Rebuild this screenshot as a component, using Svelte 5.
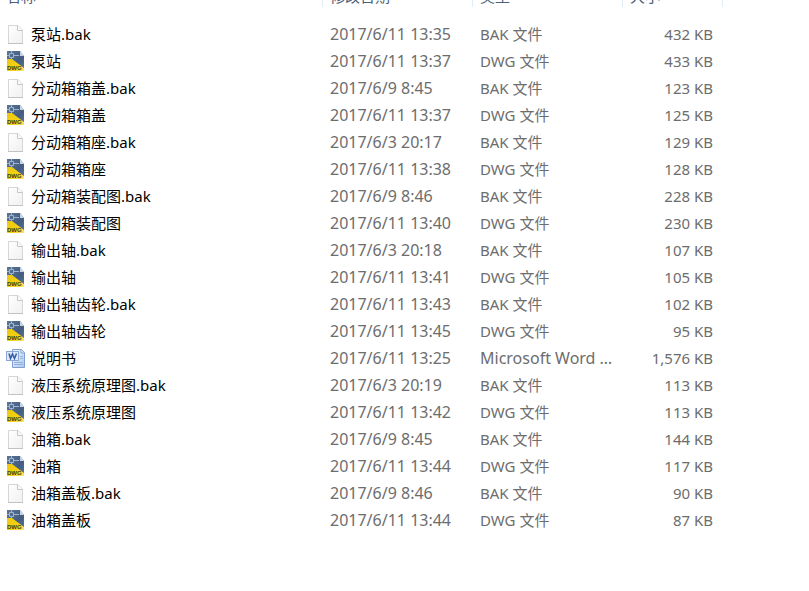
<script lang="ts">
  type Kind = 'bak' | 'dwg' | 'doc';
  type FileRow = { name: string; date: string; kind: Kind; size: string };

  const typeNames = {
    bak: 'BAK 文件',
    dwg: 'DWG 文件',
    doc: 'Microsoft Word 文档'
  };

  const files: FileRow[] = [
    { name: '泵站.bak', date: '2017/6/11 13:35', kind: 'bak', size: '432 KB' },
    { name: '泵站', date: '2017/6/11 13:37', kind: 'dwg', size: '433 KB' },
    { name: '分动箱箱盖.bak', date: '2017/6/9 8:45', kind: 'bak', size: '123 KB' },
    { name: '分动箱箱盖', date: '2017/6/11 13:37', kind: 'dwg', size: '125 KB' },
    { name: '分动箱箱座.bak', date: '2017/6/3 20:17', kind: 'bak', size: '129 KB' },
    { name: '分动箱箱座', date: '2017/6/11 13:38', kind: 'dwg', size: '128 KB' },
    { name: '分动箱装配图.bak', date: '2017/6/9 8:46', kind: 'bak', size: '228 KB' },
    { name: '分动箱装配图', date: '2017/6/11 13:40', kind: 'dwg', size: '230 KB' },
    { name: '输出轴.bak', date: '2017/6/3 20:18', kind: 'bak', size: '107 KB' },
    { name: '输出轴', date: '2017/6/11 13:41', kind: 'dwg', size: '105 KB' },
    { name: '输出轴齿轮.bak', date: '2017/6/11 13:43', kind: 'bak', size: '102 KB' },
    { name: '输出轴齿轮', date: '2017/6/11 13:45', kind: 'dwg', size: '95 KB' },
    { name: '说明书', date: '2017/6/11 13:25', kind: 'doc', size: '1,576 KB' },
    { name: '液压系统原理图.bak', date: '2017/6/3 20:19', kind: 'bak', size: '113 KB' },
    { name: '液压系统原理图', date: '2017/6/11 13:42', kind: 'dwg', size: '113 KB' },
    { name: '油箱.bak', date: '2017/6/9 8:45', kind: 'bak', size: '144 KB' },
    { name: '油箱', date: '2017/6/11 13:44', kind: 'dwg', size: '117 KB' },
    { name: '油箱盖板.bak', date: '2017/6/9 8:46', kind: 'bak', size: '90 KB' },
    { name: '油箱盖板', date: '2017/6/11 13:44', kind: 'dwg', size: '87 KB' }
  ];
</script>

<svg class="defs" aria-hidden="true">
  <defs>
    <linearGradient id="paper" x1="0" y1="0" x2="1" y2="1">
      <stop offset="0" stop-color="#fff" />
      <stop offset="1" stop-color="#f0f0f0" />
    </linearGradient>
    <linearGradient id="blue" x1="0" y1="0" x2="1" y2="1">
      <stop offset="0" stop-color="#5a7596" />
      <stop offset="0.6" stop-color="#435c80" />
      <stop offset="1" stop-color="#5a769c" />
    </linearGradient>
    <linearGradient id="yellow" x1="0" y1="0" x2="1" y2="1">
      <stop offset="0" stop-color="#ecc810" />
      <stop offset="0.6" stop-color="#f5d012" />
      <stop offset="1" stop-color="#fae27a" />
    </linearGradient>
    <linearGradient id="page" x1="0" y1="0" x2="1" y2="1">
      <stop offset="0" stop-color="#f7faff" />
      <stop offset="1" stop-color="#a9c5ee" />
    </linearGradient>
  </defs>
</svg>

<main class="file-list">
  <table>
    <colgroup>
      <col class="col-name" />
      <col class="col-date" />
      <col class="col-type" />
      <col class="col-size" />
    </colgroup>
    <thead>
      <tr>
        <th scope="col">名称</th>
        <th scope="col">修改日期</th>
        <th scope="col">类型</th>
        <th scope="col">大小</th>
      </tr>
    </thead>
    <tbody>
      {#each files as file}
        <tr>
          <td class="name">
            <div class="name-cell">
              <svg class="icon" viewBox="0 0 20 22" aria-hidden="true">
                {#if file.kind === 'bak'}
                  <path d="M2.5 1.5H12L16.5 6V19.5H2.5Z" fill="url(#paper)" stroke="#d6d6d6" />
                  <path d="M11.5 1.5V6.5H16.5" fill="#fafafa" stroke="#c6c6c6" />
                  <path d="M2 19.5H17" stroke="#c2c2c2" />
                {:else if file.kind === 'dwg'}
                  <path d="M1 0H14L18 5V20H1Z" fill="url(#blue)" />
                  <path d="M14 0V5H18Z" fill="#c9d6e6" />
                  <path d="M3.5 2.5H7.5V6.5H3.5ZM1 4.5H3.5M5.5 0V2.5M7.5 4.5H13M5.5 6.5V8" fill="none" stroke="#9fb5cf" />
                  <path d="M1 8H6L18 17V20H1Z" fill="url(#yellow)" />
                  <text x="1" y="19" class="dwg-label">DWG</text>
                {:else}
                  <path d="M6.5 1.5H15.5L18.5 4.5V19.5H6.5Z" fill="url(#page)" stroke="#7f9fd2" />
                  <path d="M15 1.5V5H18.5" fill="#e6effc" stroke="#7f9fd2" />
                  <path d="M14 8.5H17M14 10.5H17M8 14.5H17M8 16.5H17" stroke="#93b2df" />
                  <rect x="0.5" y="3.5" width="12" height="9" fill="#dfe9f8" stroke="#8ba8d5" />
                  <path d="M3 5.5L4.5 10.5L6.5 6L8.5 10.5L10.5 5.5" fill="none" stroke="#3560ad" stroke-width="1.6" />
                {/if}
              </svg>
              <span>{file.name}</span>
            </div>
          </td>
          <td class="wide">{file.date}</td>
          <td class:wide={file.kind === 'doc'}>{typeNames[file.kind]}</td>
          <td class="size">{file.size}</td>
        </tr>
      {/each}
    </tbody>
  </table>
</main>

<style>
  :global(body) {
    margin: 0;
    background: #fff;
  }

  .defs {
    position: absolute;
    width: 0;
    height: 0;
  }

  .file-list {
    overflow: hidden;
    font-family: 'Noto Sans', 'Noto Sans CJK SC', sans-serif;
    font-size: 15px;
    line-height: 27px;
    color: #6d6d6d;
  }

  /* the heading row is scrolled half out of view */
  table {
    width: 723px;
    margin-top: -15px;
    table-layout: fixed;
    border-collapse: separate;
    border-spacing: 0;
  }

  thead::after {
    content: '';
    display: block;
    height: 14px;
  }

  .col-name {
    width: 323px;
  }

  .col-date,
  .col-type {
    width: 150px;
  }

  .col-size {
    width: 100px;
  }

  th {
    height: 22px;
    padding: 0 7px;
    border-right: 1px solid #e3edf8;
    font-weight: normal;
    line-height: 22px;
    text-align: left;
    color: #4c607a;
  }

  th:first-child {
    padding-left: 6px;
  }

  td {
    height: 27px;
    padding: 0 10px 0 7px;
    overflow: hidden;
    white-space: nowrap;
    text-overflow: ellipsis;
  }

  .name {
    padding: 0 6px;
    color: #000;
  }

  .name-cell {
    display: flex;
    align-items: center;
    gap: 5px;
    height: 27px;
  }

  .icon {
    flex: none;
    width: 20px;
    height: 22px;
  }

  .dwg-label {
    font: bold 6px 'Liberation Sans', sans-serif;
    fill: #3f3b18;
  }

  .wide {
    font-size: 16px;
  }

  .size {
    text-align: right;
  }
</style>
